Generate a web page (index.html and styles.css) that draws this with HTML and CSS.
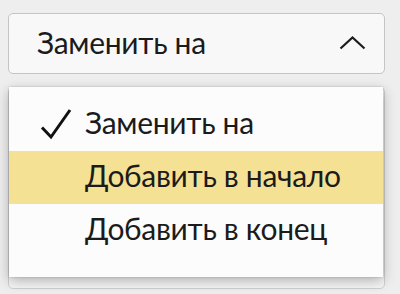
FILE: index.html
```html
<!DOCTYPE html>
<html lang="ru">
<head>
<meta charset="utf-8">
<link rel="stylesheet" href="styles.css">
</head>
<body>
<div class="field">
  <div class="select">
    <span class="select-text">Заменить на</span>
    <svg class="chevron" width="27" height="14" viewBox="0 0 27 14"><path d="M1.5 12.5 L13.5 1.5 L25.5 12.5" fill="none" stroke="#1c1c1c" stroke-width="2.2"/></svg>
  </div>
  <div class="under"></div>
  <ul class="menu">
    <li class="item checked">
      <svg class="check" width="32" height="32" viewBox="0 0 32 32"><path d="M2 19.5 L11 29 L30 2" fill="none" stroke="#111" stroke-width="3"/></svg>
      <span>Заменить на</span>
    </li>
    <li class="item active"><span>Добавить в начало</span></li>
    <li class="item"><span>Добавить в конец</span></li>
  </ul>
</div>
</body>
</html>
```
FILE: styles.css
```css
html, body {
  margin: 0;
  padding: 0;
  background: #eeeeee;
  width: 400px;
  height: 294px;
  overflow: hidden;
}
body {
  font-family: "Lato", "Noto Sans", sans-serif;
  color: #1b1b1b;
  letter-spacing: -0.3px;
}
.field {
  position: relative;
  padding: 13px 15px 0 8px;
}
.select {
  box-sizing: border-box;
  height: 61px;
  border: 1px solid #c4c4c4;
  border-radius: 5px;
  background: #f8f8f8;
  display: flex;
  align-items: center;
  justify-content: space-between;
  padding: 0 18px 0 28px;
}
.select-text {
  font-size: 30px;
  line-height: 1;
  margin-top: -3px;
}
.chevron {
  display: block;
  margin-top: -2px;
}
.under {
  margin-top: 13px;
  height: 200px;
  border: 1px solid #d0d0d0;
  border-radius: 5px;
  background: #f6f6f6;
}
.menu {
  position: absolute;
  left: 9px;
  top: 87px;
  width: 374px;
  box-sizing: border-box;
  margin: 0;
  padding: 11px 0 20px;
  list-style: none;
  background: #fcfcfc;
  box-shadow: 0 4px 12px rgba(0,0,0,0.28), 0 0 2px rgba(0,0,0,0.2);
}
.item {
  position: relative;
  box-sizing: border-box;
  height: 53px;
  display: flex;
  align-items: center;
  padding: 0 0 6px 76px;
  font-size: 30px;
}
.item.active {
  background: #f5e193;
}
.check {
  position: absolute;
  left: 31px;
  top: 10px;
}
```
